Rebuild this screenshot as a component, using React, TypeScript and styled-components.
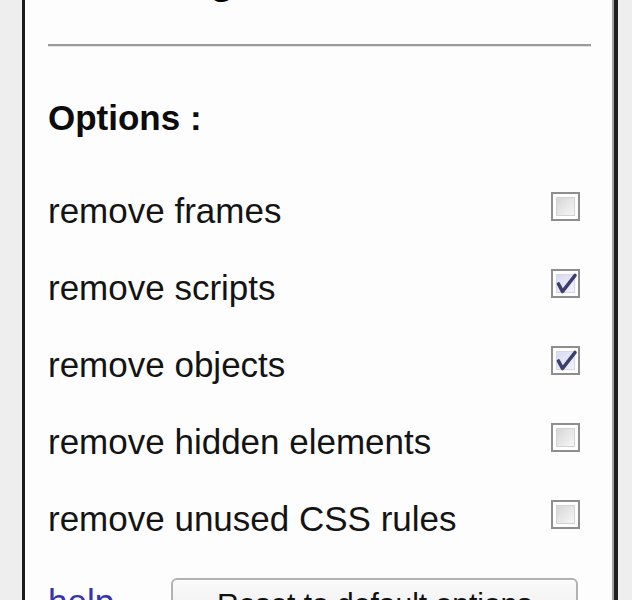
import styled, { createGlobalStyle } from "styled-components";

const GlobalStyle = createGlobalStyle`
    html, body {
        margin: 0;
        padding: 0;
        background: #eeeeee;
        overflow: hidden;
        font-family: "Liberation Sans", Arial, sans-serif;
    }
`;

const Page = styled.div`
    display: flex;
    min-height: 600px;
`;

const Panel = styled.div`
    margin-left: 22px;
    width: 596px;
    box-sizing: border-box;
    background: #fdfdfd;
    border-left: 3px solid #1c1c1c;
    border-right: 4px solid #202020;
    box-shadow: inset -2px 0 0 #a3a3a3;
    padding: 0 23px;
    color: #141414;
`;

const Title = styled.h1`
    margin: -42px 0 0;
    font-size: 42px;
    line-height: 42px;
    font-weight: bold;
    color: #000;
    white-space: nowrap;
`;

const Divider = styled.hr`
    margin: 44px 0 0;
    height: 0;
    border: none;
    border-top: 2px solid #9b9b9b;
    border-bottom: 1px solid #e2e2e2;
`;

const SectionLabel = styled.div`
    margin-top: 51px;
    font-size: 35px;
    line-height: 40px;
    font-weight: bold;
    color: #0c0c0c;
`;

const OptionList = styled.ul`
    list-style: none;
    margin: 53px 0 0;
    padding: 0;
    display: flex;
    flex-direction: column;
    gap: 37px;
`;

const OptionRow = styled.li`
    display: flex;
    justify-content: space-between;
    align-items: flex-start;
    height: 40px;
    padding-right: 11px;
    font-size: 35px;
    line-height: 40px;
`;

const Box = styled.span`
    position: relative;
    display: block;
    width: 29px;
    height: 29px;
    margin-top: 1px;
    box-sizing: border-box;
    border: 2px solid #8e8e8e;
    padding: 3px;
    background: #fff;
`;

const Fill = styled.span<{ $checked?: boolean }>`
    display: block;
    width: 100%;
    height: 100%;
    box-sizing: border-box;
    border: 1px solid ${(p) => (p.$checked ? "#d6d6ea" : "#d2d2d2")};
    background: ${(p) =>
        p.$checked
            ? "linear-gradient(135deg, #d9daf0, #f3f3fb)"
            : "linear-gradient(135deg, #d6d6d6, #f7f7f7)"};
`;

const Tick = styled.svg`
    position: absolute;
    left: -2px;
    top: -2px;
    width: 29px;
    height: 29px;
`;

const Footer = styled.div`
    display: flex;
    align-items: baseline;
    gap: 57px;
    margin-top: 39px;
`;

const HelpLink = styled.a`
    font-size: 35px;
    line-height: 40px;
    color: #3434b0;
    text-decoration: underline;
`;

const ResetButton = styled.button`
    width: 407px;
    box-sizing: border-box;
    padding: 7px 0;
    border: 2px solid #b2b2b2;
    border-radius: 6px;
    background: linear-gradient(#fafafa, #ececec);
    box-shadow: inset 0 1px 0 #fff;
    font-family: "Liberation Sans", Arial, sans-serif;
    font-size: 30px;
    line-height: 34px;
    color: #111;
    text-align: center;
`;

function Checkbox({ checked }: { checked?: boolean }) {
    return (
        <Box>
            <Fill $checked={checked} />
            {checked && (
                <Tick viewBox="0 0 29 29">
                    <path
                        d="M7.5 15 L11.5 22.5 L24 6.5"
                        fill="none"
                        stroke="#3e3e6e"
                        strokeWidth="3.6"
                        strokeLinecap="round"
                        strokeLinejoin="round"
                    />
                </Tick>
            )}
        </Box>
    );
}

const options = [
    { label: "remove frames", checked: false },
    { label: "remove scripts", checked: true },
    { label: "remove objects", checked: true },
    { label: "remove hidden elements", checked: false },
    { label: "remove unused CSS rules", checked: false },
];

function App() {
    return (
        <Page>
            <GlobalStyle />
            <Panel>
                <Title>Save Page Tools</Title>
                <Divider />
                <SectionLabel>Options :</SectionLabel>
                <OptionList>
                    {options.map((opt) => (
                        <OptionRow key={opt.label}>
                            <span>{opt.label}</span>
                            <Checkbox checked={opt.checked} />
                        </OptionRow>
                    ))}
                </OptionList>
                <Footer>
                    <HelpLink href="#">help</HelpLink>
                    <ResetButton>Reset to default options</ResetButton>
                </Footer>
            </Panel>
        </Page>
    );
}

export default App;
